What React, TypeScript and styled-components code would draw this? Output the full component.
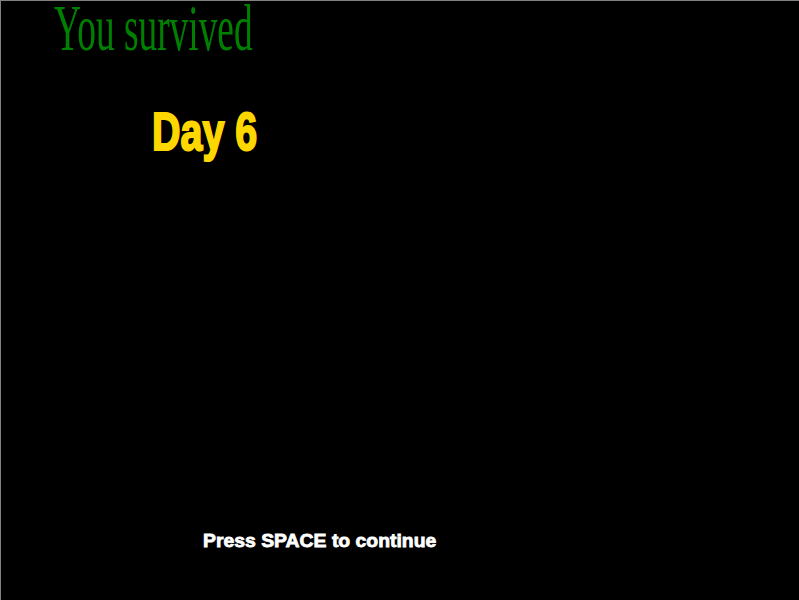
import React from "react";
import styled, { createGlobalStyle } from "styled-components";

const Global = createGlobalStyle`
  html, body {
    margin: 0;
    padding: 0;
    background: #000;
    overflow: hidden;
  }
`;

const Screen = styled.div`
  box-sizing: border-box;
  width: 799px;
  height: 600px;
  background: #000;
  border-top: 1px solid #808080;
  border-left: 1px solid #808080;
  display: flex;
  flex-direction: column;
  align-items: flex-start;
  overflow: hidden;
`;

const Title = styled.div`
  font-family: "Liberation Serif", "Times New Roman", serif;
  font-size: 66px;
  line-height: 50px;
  color: #008000;
  white-space: nowrap;
  margin: 2px 0 0 53px;
  transform: scaleX(0.566);
  transform-origin: left center;
`;

const DayLabel = styled.div`
  font-family: "Liberation Sans", Arial, sans-serif;
  font-weight: bold;
  font-size: 54px;
  line-height: 54px;
  color: #ffd700;
  white-space: nowrap;
  margin: 51px 0 0 151px;
  -webkit-text-stroke: 2px #ffd700;
  transform: scaleX(0.73);
  transform-origin: left center;
`;

const Prompt = styled.div`
  font-family: "Liberation Sans", Arial, sans-serif;
  font-weight: bold;
  font-size: 19px;
  line-height: 19px;
  color: #ffffff;
  white-space: nowrap;
  margin: 373px 0 0 202px;
  -webkit-text-stroke: 0.8px #ffffff;
  transform: scaleX(1.02);
  transform-origin: left center;
`;

export default function App() {
  return (
    <>
      <Global />
      <Screen>
        <Title>You survived</Title>
        <DayLabel>Day 6</DayLabel>
        <Prompt>Press SPACE to continue</Prompt>
      </Screen>
    </>
  );
}
